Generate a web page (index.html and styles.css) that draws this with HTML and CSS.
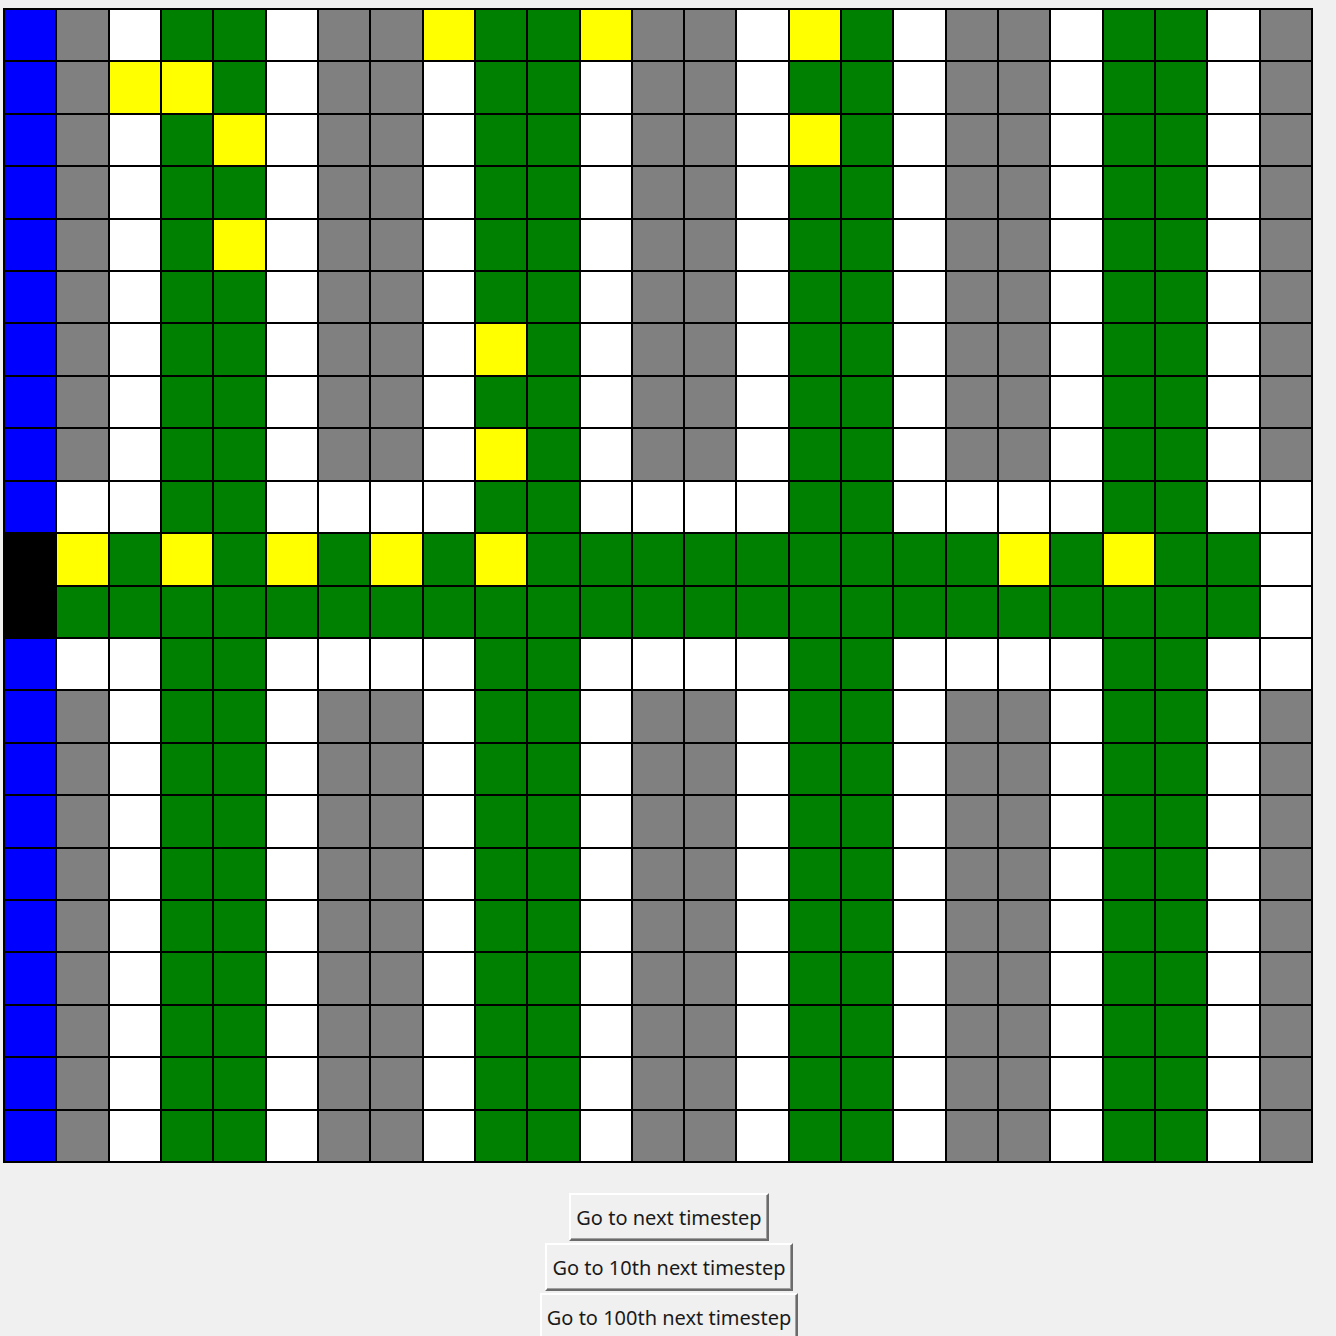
FILE: index.html
```html
<!DOCTYPE html>
<html>
<head>
<meta charset="utf-8">
<title>Simulation</title>
<link rel="stylesheet" href="styles.css">
</head>
<body>
<div class="app">
  <div class="board">
    <!-- row 0 -->
    <div class="bl"></div><div class="gr"></div><div class="wh"></div><div class="gn"></div><div class="gn"></div><div class="wh"></div><div class="gr"></div><div class="gr"></div><div class="ye"></div><div class="gn"></div><div class="gn"></div><div class="ye"></div><div class="gr"></div><div class="gr"></div><div class="wh"></div><div class="ye"></div><div class="gn"></div><div class="wh"></div><div class="gr"></div><div class="gr"></div><div class="wh"></div><div class="gn"></div><div class="gn"></div><div class="wh"></div><div class="gr"></div>
    <!-- row 1 -->
    <div class="bl"></div><div class="gr"></div><div class="ye"></div><div class="ye"></div><div class="gn"></div><div class="wh"></div><div class="gr"></div><div class="gr"></div><div class="wh"></div><div class="gn"></div><div class="gn"></div><div class="wh"></div><div class="gr"></div><div class="gr"></div><div class="wh"></div><div class="gn"></div><div class="gn"></div><div class="wh"></div><div class="gr"></div><div class="gr"></div><div class="wh"></div><div class="gn"></div><div class="gn"></div><div class="wh"></div><div class="gr"></div>
    <!-- row 2 -->
    <div class="bl"></div><div class="gr"></div><div class="wh"></div><div class="gn"></div><div class="ye"></div><div class="wh"></div><div class="gr"></div><div class="gr"></div><div class="wh"></div><div class="gn"></div><div class="gn"></div><div class="wh"></div><div class="gr"></div><div class="gr"></div><div class="wh"></div><div class="ye"></div><div class="gn"></div><div class="wh"></div><div class="gr"></div><div class="gr"></div><div class="wh"></div><div class="gn"></div><div class="gn"></div><div class="wh"></div><div class="gr"></div>
    <!-- row 3 -->
    <div class="bl"></div><div class="gr"></div><div class="wh"></div><div class="gn"></div><div class="gn"></div><div class="wh"></div><div class="gr"></div><div class="gr"></div><div class="wh"></div><div class="gn"></div><div class="gn"></div><div class="wh"></div><div class="gr"></div><div class="gr"></div><div class="wh"></div><div class="gn"></div><div class="gn"></div><div class="wh"></div><div class="gr"></div><div class="gr"></div><div class="wh"></div><div class="gn"></div><div class="gn"></div><div class="wh"></div><div class="gr"></div>
    <!-- row 4 -->
    <div class="bl"></div><div class="gr"></div><div class="wh"></div><div class="gn"></div><div class="ye"></div><div class="wh"></div><div class="gr"></div><div class="gr"></div><div class="wh"></div><div class="gn"></div><div class="gn"></div><div class="wh"></div><div class="gr"></div><div class="gr"></div><div class="wh"></div><div class="gn"></div><div class="gn"></div><div class="wh"></div><div class="gr"></div><div class="gr"></div><div class="wh"></div><div class="gn"></div><div class="gn"></div><div class="wh"></div><div class="gr"></div>
    <!-- row 5 -->
    <div class="bl"></div><div class="gr"></div><div class="wh"></div><div class="gn"></div><div class="gn"></div><div class="wh"></div><div class="gr"></div><div class="gr"></div><div class="wh"></div><div class="gn"></div><div class="gn"></div><div class="wh"></div><div class="gr"></div><div class="gr"></div><div class="wh"></div><div class="gn"></div><div class="gn"></div><div class="wh"></div><div class="gr"></div><div class="gr"></div><div class="wh"></div><div class="gn"></div><div class="gn"></div><div class="wh"></div><div class="gr"></div>
    <!-- row 6 -->
    <div class="bl"></div><div class="gr"></div><div class="wh"></div><div class="gn"></div><div class="gn"></div><div class="wh"></div><div class="gr"></div><div class="gr"></div><div class="wh"></div><div class="ye"></div><div class="gn"></div><div class="wh"></div><div class="gr"></div><div class="gr"></div><div class="wh"></div><div class="gn"></div><div class="gn"></div><div class="wh"></div><div class="gr"></div><div class="gr"></div><div class="wh"></div><div class="gn"></div><div class="gn"></div><div class="wh"></div><div class="gr"></div>
    <!-- row 7 -->
    <div class="bl"></div><div class="gr"></div><div class="wh"></div><div class="gn"></div><div class="gn"></div><div class="wh"></div><div class="gr"></div><div class="gr"></div><div class="wh"></div><div class="gn"></div><div class="gn"></div><div class="wh"></div><div class="gr"></div><div class="gr"></div><div class="wh"></div><div class="gn"></div><div class="gn"></div><div class="wh"></div><div class="gr"></div><div class="gr"></div><div class="wh"></div><div class="gn"></div><div class="gn"></div><div class="wh"></div><div class="gr"></div>
    <!-- row 8 -->
    <div class="bl"></div><div class="gr"></div><div class="wh"></div><div class="gn"></div><div class="gn"></div><div class="wh"></div><div class="gr"></div><div class="gr"></div><div class="wh"></div><div class="ye"></div><div class="gn"></div><div class="wh"></div><div class="gr"></div><div class="gr"></div><div class="wh"></div><div class="gn"></div><div class="gn"></div><div class="wh"></div><div class="gr"></div><div class="gr"></div><div class="wh"></div><div class="gn"></div><div class="gn"></div><div class="wh"></div><div class="gr"></div>
    <!-- row 9 -->
    <div class="bl"></div><div class="wh"></div><div class="wh"></div><div class="gn"></div><div class="gn"></div><div class="wh"></div><div class="wh"></div><div class="wh"></div><div class="wh"></div><div class="gn"></div><div class="gn"></div><div class="wh"></div><div class="wh"></div><div class="wh"></div><div class="wh"></div><div class="gn"></div><div class="gn"></div><div class="wh"></div><div class="wh"></div><div class="wh"></div><div class="wh"></div><div class="gn"></div><div class="gn"></div><div class="wh"></div><div class="wh"></div>
    <!-- row 10 -->
    <div class="bk"></div><div class="ye"></div><div class="gn"></div><div class="ye"></div><div class="gn"></div><div class="ye"></div><div class="gn"></div><div class="ye"></div><div class="gn"></div><div class="ye"></div><div class="gn"></div><div class="gn"></div><div class="gn"></div><div class="gn"></div><div class="gn"></div><div class="gn"></div><div class="gn"></div><div class="gn"></div><div class="gn"></div><div class="ye"></div><div class="gn"></div><div class="ye"></div><div class="gn"></div><div class="gn"></div><div class="wh"></div>
    <!-- row 11 -->
    <div class="bk"></div><div class="gn"></div><div class="gn"></div><div class="gn"></div><div class="gn"></div><div class="gn"></div><div class="gn"></div><div class="gn"></div><div class="gn"></div><div class="gn"></div><div class="gn"></div><div class="gn"></div><div class="gn"></div><div class="gn"></div><div class="gn"></div><div class="gn"></div><div class="gn"></div><div class="gn"></div><div class="gn"></div><div class="gn"></div><div class="gn"></div><div class="gn"></div><div class="gn"></div><div class="gn"></div><div class="wh"></div>
    <!-- row 12 -->
    <div class="bl"></div><div class="wh"></div><div class="wh"></div><div class="gn"></div><div class="gn"></div><div class="wh"></div><div class="wh"></div><div class="wh"></div><div class="wh"></div><div class="gn"></div><div class="gn"></div><div class="wh"></div><div class="wh"></div><div class="wh"></div><div class="wh"></div><div class="gn"></div><div class="gn"></div><div class="wh"></div><div class="wh"></div><div class="wh"></div><div class="wh"></div><div class="gn"></div><div class="gn"></div><div class="wh"></div><div class="wh"></div>
    <!-- row 13 -->
    <div class="bl"></div><div class="gr"></div><div class="wh"></div><div class="gn"></div><div class="gn"></div><div class="wh"></div><div class="gr"></div><div class="gr"></div><div class="wh"></div><div class="gn"></div><div class="gn"></div><div class="wh"></div><div class="gr"></div><div class="gr"></div><div class="wh"></div><div class="gn"></div><div class="gn"></div><div class="wh"></div><div class="gr"></div><div class="gr"></div><div class="wh"></div><div class="gn"></div><div class="gn"></div><div class="wh"></div><div class="gr"></div>
    <!-- row 14 -->
    <div class="bl"></div><div class="gr"></div><div class="wh"></div><div class="gn"></div><div class="gn"></div><div class="wh"></div><div class="gr"></div><div class="gr"></div><div class="wh"></div><div class="gn"></div><div class="gn"></div><div class="wh"></div><div class="gr"></div><div class="gr"></div><div class="wh"></div><div class="gn"></div><div class="gn"></div><div class="wh"></div><div class="gr"></div><div class="gr"></div><div class="wh"></div><div class="gn"></div><div class="gn"></div><div class="wh"></div><div class="gr"></div>
    <!-- row 15 -->
    <div class="bl"></div><div class="gr"></div><div class="wh"></div><div class="gn"></div><div class="gn"></div><div class="wh"></div><div class="gr"></div><div class="gr"></div><div class="wh"></div><div class="gn"></div><div class="gn"></div><div class="wh"></div><div class="gr"></div><div class="gr"></div><div class="wh"></div><div class="gn"></div><div class="gn"></div><div class="wh"></div><div class="gr"></div><div class="gr"></div><div class="wh"></div><div class="gn"></div><div class="gn"></div><div class="wh"></div><div class="gr"></div>
    <!-- row 16 -->
    <div class="bl"></div><div class="gr"></div><div class="wh"></div><div class="gn"></div><div class="gn"></div><div class="wh"></div><div class="gr"></div><div class="gr"></div><div class="wh"></div><div class="gn"></div><div class="gn"></div><div class="wh"></div><div class="gr"></div><div class="gr"></div><div class="wh"></div><div class="gn"></div><div class="gn"></div><div class="wh"></div><div class="gr"></div><div class="gr"></div><div class="wh"></div><div class="gn"></div><div class="gn"></div><div class="wh"></div><div class="gr"></div>
    <!-- row 17 -->
    <div class="bl"></div><div class="gr"></div><div class="wh"></div><div class="gn"></div><div class="gn"></div><div class="wh"></div><div class="gr"></div><div class="gr"></div><div class="wh"></div><div class="gn"></div><div class="gn"></div><div class="wh"></div><div class="gr"></div><div class="gr"></div><div class="wh"></div><div class="gn"></div><div class="gn"></div><div class="wh"></div><div class="gr"></div><div class="gr"></div><div class="wh"></div><div class="gn"></div><div class="gn"></div><div class="wh"></div><div class="gr"></div>
    <!-- row 18 -->
    <div class="bl"></div><div class="gr"></div><div class="wh"></div><div class="gn"></div><div class="gn"></div><div class="wh"></div><div class="gr"></div><div class="gr"></div><div class="wh"></div><div class="gn"></div><div class="gn"></div><div class="wh"></div><div class="gr"></div><div class="gr"></div><div class="wh"></div><div class="gn"></div><div class="gn"></div><div class="wh"></div><div class="gr"></div><div class="gr"></div><div class="wh"></div><div class="gn"></div><div class="gn"></div><div class="wh"></div><div class="gr"></div>
    <!-- row 19 -->
    <div class="bl"></div><div class="gr"></div><div class="wh"></div><div class="gn"></div><div class="gn"></div><div class="wh"></div><div class="gr"></div><div class="gr"></div><div class="wh"></div><div class="gn"></div><div class="gn"></div><div class="wh"></div><div class="gr"></div><div class="gr"></div><div class="wh"></div><div class="gn"></div><div class="gn"></div><div class="wh"></div><div class="gr"></div><div class="gr"></div><div class="wh"></div><div class="gn"></div><div class="gn"></div><div class="wh"></div><div class="gr"></div>
    <!-- row 20 -->
    <div class="bl"></div><div class="gr"></div><div class="wh"></div><div class="gn"></div><div class="gn"></div><div class="wh"></div><div class="gr"></div><div class="gr"></div><div class="wh"></div><div class="gn"></div><div class="gn"></div><div class="wh"></div><div class="gr"></div><div class="gr"></div><div class="wh"></div><div class="gn"></div><div class="gn"></div><div class="wh"></div><div class="gr"></div><div class="gr"></div><div class="wh"></div><div class="gn"></div><div class="gn"></div><div class="wh"></div><div class="gr"></div>
    <!-- row 21 -->
    <div class="bl"></div><div class="gr"></div><div class="wh"></div><div class="gn"></div><div class="gn"></div><div class="wh"></div><div class="gr"></div><div class="gr"></div><div class="wh"></div><div class="gn"></div><div class="gn"></div><div class="wh"></div><div class="gr"></div><div class="gr"></div><div class="wh"></div><div class="gn"></div><div class="gn"></div><div class="wh"></div><div class="gr"></div><div class="gr"></div><div class="wh"></div><div class="gn"></div><div class="gn"></div><div class="wh"></div><div class="gr"></div>
  </div>
  <div class="controls">
    <button class="btn">Go to next timestep</button>
    <button class="btn">Go to 10th next timestep</button>
    <button class="btn">Go to 100th next timestep</button>
  </div>
</div>
</body>
</html>
```

FILE: styles.css
```css
html, body {
  margin: 0;
  padding: 0;
  background: #f0f0f0;
}

.app {
  padding: 8px 0 0 3px;
}

.board {
  display: grid;
  grid-template-columns: repeat(25, 1fr);
  grid-template-rows: repeat(22, 1fr);
  width: 1310px;
  height: 1155px;
  box-sizing: border-box;
  border: 1px solid #000;
  background: #000;
}

.board > div {
  border: 1px solid #000;
  box-sizing: border-box;
}

.bl { background: #0000ff; }
.gr { background: #808080; }
.wh { background: #ffffff; }
.gn { background: #008000; }
.ye { background: #ffff00; }
.bk { background: #000000; }

.controls {
  display: flex;
  flex-direction: column;
  align-items: center;
  gap: 2px;
  margin-top: 30px;
  margin-left: -1px;
}

.btn {
  font-family: "Noto Sans", "Open Sans", sans-serif;
  font-size: 20px;
  color: #1a1a1a;
  background: #f0f0f0;
  height: 48px;
  padding: 0 5px;
  border-style: solid;
  border-width: 2px;
  border-color: #ffffff #6b6b6b #6b6b6b #ffffff;
  box-shadow: inset -1px -1px 0 #a0a0a0;
  margin: 0;
}
```
